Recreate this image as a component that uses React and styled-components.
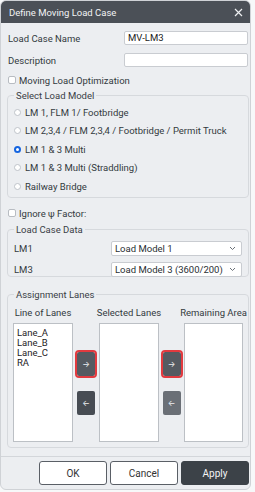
import React from 'react'
import styled, { createGlobalStyle } from 'styled-components'

const Global = createGlobalStyle`
  html, body { margin: 0; padding: 0; background: #f7f8f9; }
  body { font-family: Roboto, Inter, "Liberation Sans", sans-serif; color: #333a40; }
  * { box-sizing: border-box; }
`

const Dialog = styled.div`
  width: 251px;
  height: 490px;
  background: #eceef1;
  border: 1px solid #cfd2d6;
  border-radius: 6px;
  overflow: hidden;
  display: flex;
  flex-direction: column;
`

const Header = styled.div`
  height: 22px;
  flex: none;
  background: #4b5057;
  color: #f2f3f4;
  display: flex;
  align-items: center;
  justify-content: space-between;
  padding: 0 7px 0 8px;
  font-size: 9.5px;
`

const Body = styled.div`
  flex: 1;
  display: flex;
  flex-direction: column;
  padding: 0 2px 0 5px;
`

const FieldRow = styled.div`
  display: flex;
  align-items: center;
  justify-content: space-between;
  height: 14px;
  margin-top: ${p => p.$top}px;
  padding-left: 2px;
  font-size: 9.5px;
`

const TextInput = styled.div`
  width: 124px;
  height: 14px;
  background: #fff;
  border: 1px solid #c9ccd1;
  border-radius: 2px;
  font-size: 9.5px;
  color: #222;
  padding-left: 3px;
  line-height: 12px;
`

const Check = styled.label`
  display: flex;
  align-items: center;
  gap: 3px;
  height: 12px;
  margin-top: ${p => p.$top}px;
  font-size: 9.5px;
`

const Box = styled.span`
  width: 8px;
  height: 8px;
  background: #fff;
  border: 1px solid #b8bcc2;
  border-radius: 2px;
  margin-left: 2px;
`

const Group = styled.fieldset`
  margin: ${p => p.$top}px 0 0 1px;
  width: 242px;
  height: ${p => p.$h}px;
  border: 1px solid #d6d9dd;
  border-radius: 4px;
  padding: 0 6px;
  min-width: 0;
`

const Legend = styled.legend`
  font-size: 9.5px;
  padding: 0 2px;
  color: #3a4046;
  line-height: 11px;
`

const RadioRow = styled.div`
  display: flex;
  align-items: center;
  gap: 4px;
  height: 18.5px;
  font-size: 9.5px;
  white-space: nowrap;
  &:first-of-type { margin-top: 2px; }
`

const Radio = styled.span`
  width: 7px;
  height: 7px;
  border-radius: 50%;
  background: #fff;
  border: ${p => (p.$on ? '2px solid #1565e0' : '1px solid #bfc3c9')};
  flex: none;
`

const SelectRow = styled.div`
  display: flex;
  align-items: center;
  justify-content: space-between;
  height: 14px;
  margin-top: ${p => p.$top}px;
  font-size: 9.5px;
`

const Select = styled.div`
  width: 131px;
  height: 15px;
  background: #fff;
  border: 1px solid #c9ccd1;
  border-radius: 2px;
  display: flex;
  align-items: center;
  justify-content: space-between;
  padding: 0 5px 0 3px;
  font-size: 9.5px;
  color: #2a2f34;
  white-space: nowrap;
`

const Lanes = styled.div`
  display: grid;
  grid-template-columns: 60px 26px 60px 25px 59px;
  grid-template-rows: 14px 119px;
  row-gap: 4px;
  margin: 5px 0 0 -1px;
`

const ColHead = styled.div`
  font-size: 9.5px;
  white-space: nowrap;
  display: flex;
  align-items: center;
  justify-content: center;
  grid-column: ${p => p.$col};
`

const ListBox = styled.div`
  background: #fff;
  border: 1px solid #bcc0c5;
  padding: 4px 3px;
  font-size: 9.5px;
  line-height: 10px;
  color: #1e2226;
`

const Movers = styled.div`
  display: flex;
  flex-direction: column;
  align-items: center;
  justify-content: center;
  gap: 15px;
  padding-top: 2px;
`

const Mover = styled.div`
  width: 18px;
  height: 24px;
  border-radius: 2px;
  background: ${p => p.$bg};
  color: #eef0f2;
  font-size: 8px;
  display: flex;
  align-items: center;
  justify-content: center;
  outline: ${p => (p.$mark ? '2px solid #e23a3f' : 'none')};
`

const Divider = styled.div`
  height: 1px;
  background: #d3d6da;
  margin: 8px -2px 0 -5px;
`

const Footer = styled.div`
  display: flex;
  justify-content: flex-end;
  gap: 3px;
  margin: 4px -1px 0 0;
`

const Btn = styled.div`
  width: ${p => p.$w}px;
  height: 24px;
  border-radius: 3px;
  border: 1px solid ${p => (p.$primary ? '#3c4248' : '#5a5f66')};
  background: ${p => (p.$primary ? '#3c4248' : '#fff')};
  color: ${p => (p.$primary ? '#f4f5f6' : '#333')};
  font-size: 10px;
  display: flex;
  align-items: center;
  justify-content: center;
`

const Chevron = () => (
  <svg width="7" height="5" viewBox="0 0 7 5">
    <path d="M1 1 L3.5 3.5 L6 1" fill="none" stroke="#6b7178" strokeWidth="1" />
  </svg>
)

const CloseIcon = () => (
  <svg width="9" height="9" viewBox="0 0 9 9">
    <path d="M1 1 L8 8 M8 1 L1 8" stroke="#eef0f2" strokeWidth="1.2" />
  </svg>
)

const models = [
  'LM 1, FLM 1/ Footbridge',
  'LM 2,3,4 / FLM 2,3,4 / Footbridge / Permit Truck',
  'LM 1 & 3 Multi',
  'LM 1 & 3 Multi (Straddling)',
  'Railway Bridge',
]

export default function App() {
  return (
    <>
      <Global />
      <Dialog>
        <Header>
          <span>Define Moving Load Case</span>
          <CloseIcon />
        </Header>
        <Body>
          <FieldRow $top={8}>
            <span>Load Case Name</span>
            <TextInput>MV-LM3</TextInput>
          </FieldRow>
          <FieldRow $top={8}>
            <span>Description</span>
            <TextInput />
          </FieldRow>
          <Check $top={7}>
            <Box />
            Moving Load Optimization
          </Check>
          <Group $top={4} $h={108}>
            <Legend>Select Load Model</Legend>
            {models.map((m, i) => (
              <RadioRow key={m}>
                <Radio $on={i === 2} />
                {m}
              </RadioRow>
            ))}
          </Group>
          <Check $top={9}>
            <Box />
            Ignore ψ Factor:
          </Check>
          <Group $top={5} $h={53}>
            <Legend>Load Case Data</Legend>
            <SelectRow $top={6}>
              <span>LM1</span>
              <Select>Load Model 1<Chevron /></Select>
            </SelectRow>
            <SelectRow $top={7}>
              <span>LM3</span>
              <Select>Load Model 3 (3600/200)<Chevron /></Select>
            </SelectRow>
          </Group>
          <Group $top={12} $h={159}>
            <Legend>Assignment Lanes</Legend>
            <Lanes>
              <ColHead $col={1}>Line of Lanes</ColHead>
              <ColHead $col={3}>Selected Lanes</ColHead>
              <ColHead $col={5}>Remaining Area</ColHead>
              <ListBox>
                Lane_A<br />Lane_B<br />Lane_C<br />RA
              </ListBox>
              <Movers>
                <Mover $bg="#555a61" $mark>→</Mover>
                <Mover $bg="#474c53">←</Mover>
              </Movers>
              <ListBox />
              <Movers>
                <Mover $bg="#555a61" $mark>→</Mover>
                <Mover $bg="#6a6f76">←</Mover>
              </Movers>
              <ListBox />
            </Lanes>
          </Group>
          <Divider />
          <Footer>
            <Btn $w={68}>OK</Btn>
            <Btn $w={68}>Cancel</Btn>
            <Btn $w={68} $primary>Apply</Btn>
          </Footer>
        </Body>
      </Dialog>
    </>
  )
}
